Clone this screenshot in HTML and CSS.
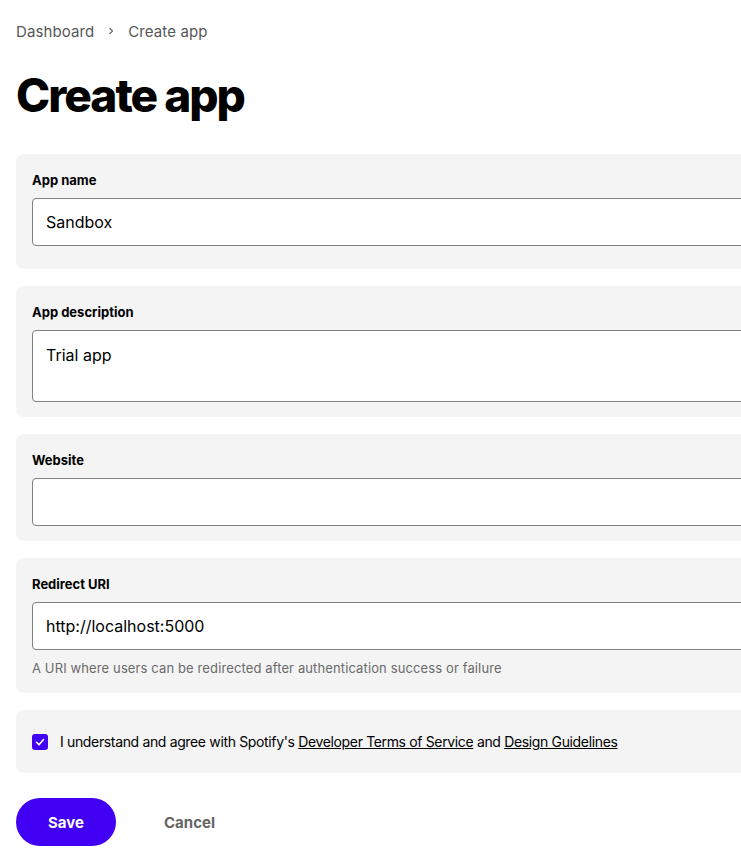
FILE: index.html
```html
<!DOCTYPE html>
<html>
<head>
<meta charset="utf-8">
<link rel="stylesheet" href="styles.css">
</head>
<body>
<div class="page">
  <nav class="crumbs">
    <span class="crumb">Dashboard</span>
    <svg class="chev" width="8" height="10" viewBox="0 0 8 10"><path d="M2.5 2 L5.5 5 L2.5 8" fill="none" stroke="#6a6a6a" stroke-width="1.2"/></svg>
    <span class="crumb">Create app</span>
  </nav>
  <h1 class="title">Create app</h1>
  <form class="form">
    <div class="card card-first">
      <label class="label">App name</label>
      <div class="field">Sandbox</div>
    </div>
    <div class="card">
      <label class="label">App description</label>
      <div class="field field-area">Trial app</div>
    </div>
    <div class="card">
      <label class="label">Website</label>
      <div class="field"></div>
    </div>
    <div class="card">
      <label class="label">Redirect URI</label>
      <div class="field">http://localhost:5000</div>
      <p class="help">A URI where users can be redirected after authentication success or failure</p>
    </div>
    <div class="card card-check">
      <span class="check"><svg width="16" height="16" viewBox="0 0 16 16"><path d="M4.5 8.3 L7 10.8 L11.5 5.5" fill="none" stroke="#fff" stroke-width="1.6" stroke-linecap="round" stroke-linejoin="round"/></svg></span>
      <span class="agree">I understand and agree with Spotify's <a class="link">Developer Terms of Service</a> and <a class="link">Design Guidelines</a></span>
    </div>
    <div class="actions">
      <button type="button" class="btn-save">Save</button>
      <button type="button" class="btn-cancel">Cancel</button>
    </div>
  </form>
</div>
</body>
</html>
```
FILE: styles.css
```css
html, body {
  margin: 0;
  padding: 0;
  background: #fff;
  overflow: hidden;
}
body {
  font-family: Inter, "Liberation Sans", sans-serif;
  color: #000;
}
.page {
  width: 900px;
  padding: 0 16px;
}
.crumbs {
  display: flex;
  align-items: center;
  height: 20px;
  padding-top: 21px;
  gap: 12px;
}
.crumb {
  font-size: 15px;
  color: #575757;
  letter-spacing: 0.1px;
}
.chev {
  margin: 0 1px;
}
.title {
  margin: 0;
  padding-top: 26px;
  font-size: 46px;
  line-height: 56px;
  font-weight: 800;
  letter-spacing: -2px;
}
.form {
  margin-top: 31px;
  display: flex;
  flex-direction: column;
  gap: 17px;
}
.card {
  background: #f4f4f4;
  border-radius: 8px;
  padding: 16px 16px 15px;
}
.card-first {
  padding-bottom: 23px;
}
.label {
  display: block;
  font-size: 13px;
  font-weight: 700;
  line-height: 20px;
  margin-bottom: 8px;
}
.field {
  box-sizing: border-box;
  height: 48px;
  border: 1px solid #7f7f7f;
  border-radius: 4px;
  background: #fff;
  padding: 0 13px;
  font-size: 16px;
  line-height: 46px;
  color: #000;
}
.field-area {
  height: 72px;
  line-height: 22px;
  padding-top: 13px;
}
.help {
  margin: 8px 0 0;
  font-size: 13px;
  line-height: 20px;
  color: #6a6a6a;
  letter-spacing: 0.12px;
}
.card-check {
  display: flex;
  align-items: center;
  gap: 12px;
  height: 63px;
  box-sizing: border-box;
  padding: 0 16px;
}
.check {
  width: 16px;
  height: 16px;
  border-radius: 3px;
  background: #4100f4;
  display: flex;
}
.agree {
  font-size: 14px;
  color: #000;
  letter-spacing: -0.35px;
}
.link {
  color: #000;
  text-decoration: underline;
}
.actions {
  display: flex;
  align-items: center;
  gap: 24px;
  margin-top: 8px;
}
.btn-save {
  width: 100px;
  height: 48px;
  border: none;
  border-radius: 24px;
  background: #4100f4;
  color: #fff;
  font-family: Inter, "Liberation Sans", sans-serif;
  font-size: 15px;
  font-weight: 700;
}
.btn-cancel {
  background: none;
  border: none;
  padding: 0 24px;
  color: #656565;
  font-family: Inter, "Liberation Sans", sans-serif;
  font-size: 15px;
  font-weight: 700;
}
```
